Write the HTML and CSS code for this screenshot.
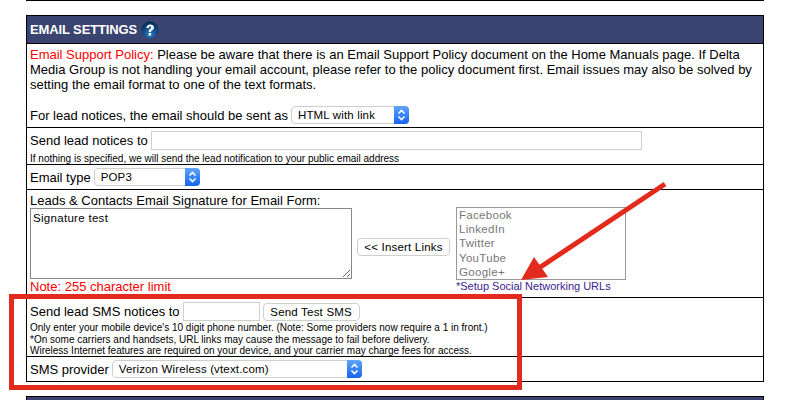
FILE: index.html
```html
<!DOCTYPE html>
<html lang="en">
<head>
<meta charset="utf-8">
<title>Email Settings</title>
<link rel="stylesheet" href="styles.css">
</head>
<body>
<div class="page">
  <div class="topline"></div>
  <section class="panel">
    <h2 class="panel-head">EMAIL SETTINGS
      <svg class="help" viewBox="0 0 18 18" width="18" height="18" aria-hidden="true">
        <defs>
          <radialGradient id="helpg" cx="50%" cy="75%" r="70%">
            <stop offset="0" stop-color="#2f7fc0"/>
            <stop offset="0.6" stop-color="#0f4a82"/>
            <stop offset="1" stop-color="#062c52"/>
          </radialGradient>
        </defs>
        <circle cx="9" cy="9" r="8.5" fill="url(#helpg)"/>
        <path d="M5.4 6.9C5.6 4.6 7.1 3.4 9.2 3.4c2.3 0 3.7 1.2 3.7 3 0 1.4-.8 2.1-1.8 2.8-.8.5-1 .9-1 1.7H7.7c0-1.4.3-2.1 1.3-2.8.8-.6 1.2-1 1.2-1.6 0-.7-.4-1-1.1-1-.8 0-1.2.5-1.3 1.4z" fill="#fff"/>
        <rect x="7.6" y="12" width="2.5" height="2.5" fill="#fff"/>
      </svg>
    </h2>
    <div class="row row-policy">
      <p class="policy"><span class="red">Email Support Policy:</span> Please be aware that there is an Email Support Policy document on the Home Manuals page. If Delta Media Group is not handling your email account, please refer to the policy document first. Email issues may also be solved by setting the email format to one of the text formats.</p>
      <div class="line line-format">
        <label>For lead notices, the email should be sent as</label>
        <span class="select select-format"><select><option>HTML with link</option></select><span class="stepper"><svg viewBox="0 0 15 18" width="15" height="18"><path d="M4.5 7.5 7.5 4.5 10.5 7.5M4.5 10.5 7.5 13.5 10.5 10.5" fill="none" stroke="#fff" stroke-width="1.6"/></svg></span></span>
      </div>
    </div>
    <div class="row row-notices">
      <div class="line">
        <label>Send lead notices to</label>
        <input class="text text-notices" type="text">
      </div>
      <p class="fine">If nothing is specified, we will send the lead notification to your public email address</p>
    </div>
    <div class="row row-type">
      <div class="line">
        <label>Email type</label>
        <span class="select select-type"><select><option>POP3</option></select><span class="stepper"><svg viewBox="0 0 15 18" width="15" height="18"><path d="M4.5 7.5 7.5 4.5 10.5 7.5M4.5 10.5 7.5 13.5 10.5 10.5" fill="none" stroke="#fff" stroke-width="1.6"/></svg></span></span>
      </div>
    </div>
    <div class="row row-sig">
      <div class="sig-main">
        <label class="sig-label">Leads &amp; Contacts Email Signature for Email Form:</label>
        <textarea class="sig-text">Signature test</textarea>
        <div class="red note">Note: 255 character limit</div>
      </div>
      <button class="btn btn-insert" type="button">&lt;&lt; Insert Links</button>
      <div class="social">
        <ul class="social-list">
          <li>Facebook</li>
          <li>LinkedIn</li>
          <li>Twitter</li>
          <li>YouTube</li>
          <li>Google+</li>
        </ul>
        <a class="social-link" href="#">*Setup Social Networking URLs</a>
      </div>
    </div>
    <div class="row row-sms">
      <div class="line">
        <label>Send lead SMS notices to</label>
        <input class="text text-sms" type="text">
        <button class="btn btn-sms" type="button">Send Test SMS</button>
      </div>
      <p class="fine fine-sms">Only enter your mobile device's 10 digit phone number. (Note: Some providers now require a 1 in front.)<br>*On some carriers and handsets, URL links may cause the message to fail before delivery.<br>Wireless Internet features are required on your device, and your carrier may charge fees for access.</p>
    </div>
    <div class="row row-provider">
      <div class="line">
        <label>SMS provider</label>
        <span class="select select-provider"><select><option>Verizon Wireless (vtext.com)</option></select><span class="stepper"><svg viewBox="0 0 15 18" width="15" height="18"><path d="M4.5 7.5 7.5 4.5 10.5 7.5M4.5 10.5 7.5 13.5 10.5 10.5" fill="none" stroke="#fff" stroke-width="1.6"/></svg></span></span>
      </div>
    </div>
  </section>
  <div class="panel-next"></div>
  <svg class="markup" viewBox="0 0 790 400" width="790" height="400" aria-hidden="true">
    <rect x="11.5" y="296.5" width="508" height="91" fill="none" stroke="#e32b1d" stroke-width="5"/>
    <path d="M665 184 L536 270" fill="none" stroke="#e32b1d" stroke-width="5"/>
    <path d="M521 280 L534 257 L548 277 Z" fill="#e32b1d"/>
  </svg>
</div>
</body>
</html>
```
FILE: styles.css
```css
* { box-sizing: border-box; }
html, body { margin: 0; padding: 0; background: #fff; }
body { font-family: "Liberation Sans", Arial, sans-serif; font-size: 13px; line-height: 15px; color: #000; overflow: hidden; }
.page { position: relative; width: 790px; height: 400px; overflow: hidden; padding-left: 26px; }
.topline { width: 738px; height: 1px; background: #000; margin-bottom: 14px; }
.panel { width: 738px; border: 1px solid #000; }
.panel-head { margin: 0; height: 28px; background: #3b4371; color: #fff; font-size: 13px; line-height: 15px; font-weight: bold; letter-spacing: -0.12px; display: flex; align-items: center; gap: 4px; padding: 0 3px 1px; border-bottom: 1px solid #000; }
.help { display: block; margin-top: 1px; }
.row { border-bottom: 1px solid #000; padding: 0 3px; }
.row:last-child { border-bottom: 0; }
.red { color: #f00; }
.policy { margin: 0; }
.row-policy { height: 84px; padding-top: 3px; }
.line { display: flex; align-items: center; }
.line label { white-space: nowrap; }
.line-format { margin-top: 14px; gap: 3px; }
.select { position: relative; display: block; height: 18px; }
.select select { appearance: none; -webkit-appearance: none; width: 100%; height: 18px; border: 1px solid #cfcfcf; border-radius: 4px; background: #fff; padding: 0 0 0 6px; font: 11.5px/16px "Liberation Sans", Arial, sans-serif; letter-spacing: 0.15px; color: #000; }
.stepper { position: absolute; top: 0; right: 0; width: 15px; height: 18px; border-radius: 0 4px 4px 0; background: linear-gradient(#5fa4fa, #1565ef); }
.stepper svg { display: block; }
.select-format { width: 118px; }
.select-type { width: 106px; margin-left: 3px; }
.select-provider { width: 250px; margin-left: 3px; }
.text { display: block; height: 19px; border: 1px solid #cfcfcf; background: #fff; padding: 0 2px; margin: 0; }
.row-notices { height: 37px; padding-top: 3px; }
.text-notices { width: 491px; margin-left: 3px; }
.fine { margin: 0; font-size: 10px; line-height: 11.5px; }
.row-notices .fine { margin-top: 3px; }
.row-type { height: 25px; padding-top: 3px; }
.row-sig { height: 108px; padding-top: 3px; display: flex; align-items: flex-start; }
.sig-main { width: 322px; flex: none; }
.sig-label { display: block; height: 15px; }
.sig-text { display: block; width: 322px; height: 71px; margin: 0; padding: 3px 2px 2px; border: 1px solid #888; font: 11.5px/13px "Liberation Sans", Arial, sans-serif; letter-spacing: 0.3px; color: #000; }
.note { margin-top: 0; }
.btn { display: block; height: 18px; margin: 0; padding: 0; background: #fff; border: 1px solid #cfcfcf; border-radius: 4px; font: 11.5px/16px "Liberation Sans", Arial, sans-serif; letter-spacing: 0.2px; color: #000; }
.btn-insert { width: 93px; margin: 45px 0 0 5px; flex: none; }
.social { margin: 14px 0 0 6px; width: 190px; flex: none; }
.social-list { list-style: none; margin: 0; padding: 0 2px; width: 170px; height: 73px; border: 1px solid #999; color: #777; font-size: 11.5px; line-height: 14.2px; letter-spacing: 0.3px; }
.social-link { display: block; font-size: 11px; line-height: 13px; color: #3b1a8f; text-decoration: none; }
.row-sms { height: 59px; padding-top: 4px; }
.text-sms { width: 77px; margin-left: 3px; }
.btn-sms { width: 97px; margin-left: 3px; }
.fine-sms { margin-top: 1px; }
.row-provider { height: 24px; padding-top: 3px; }
.panel-next { width: 738px; height: 4px; margin-top: 14px; background: #3b4371; border: 1px solid #000; border-bottom: 0; }
.markup { position: absolute; left: 0; top: 0; pointer-events: none; }
```
